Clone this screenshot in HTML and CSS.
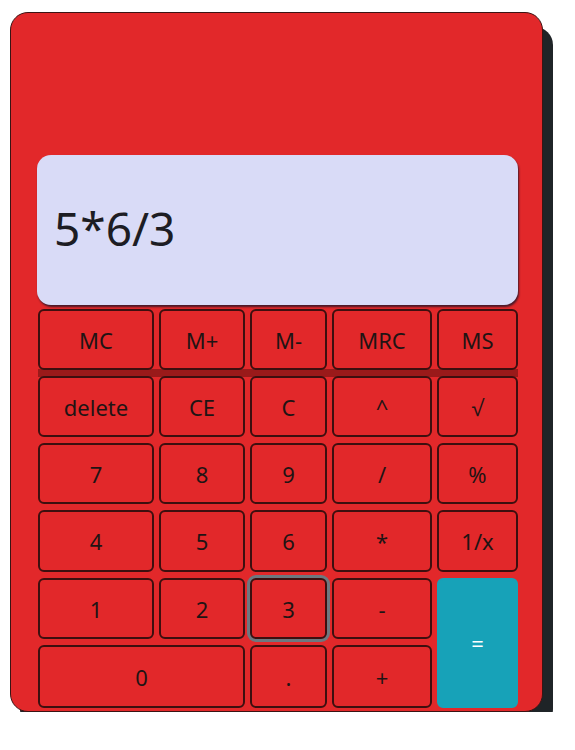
FILE: index.html
```html
<!DOCTYPE html>
<html>
<head>
<meta charset="utf-8">
<title>Calculator</title>
<link rel="stylesheet" href="styles.css">
</head>
<body>
<div class="calc">
  <div class="display">5*6/3</div>
  <div class="keys">
    <button class="key">MC</button>
    <button class="key">M+</button>
    <button class="key">M-</button>
    <button class="key">MRC</button>
    <button class="key">MS</button>
    <button class="key">delete</button>
    <button class="key">CE</button>
    <button class="key">C</button>
    <button class="key">^</button>
    <button class="key">√</button>
    <button class="key">7</button>
    <button class="key">8</button>
    <button class="key">9</button>
    <button class="key">/</button>
    <button class="key">%</button>
    <button class="key">4</button>
    <button class="key">5</button>
    <button class="key">6</button>
    <button class="key">*</button>
    <button class="key">1/x</button>
    <button class="key">1</button>
    <button class="key">2</button>
    <button class="key key-focus">3</button>
    <button class="key">-</button>
    <button class="key key-eq">=</button>
    <button class="key key-zero">0</button>
    <button class="key">.</button>
    <button class="key">+</button>
  </div>
</div>
</body>
</html>
```
FILE: styles.css
```css
html, body {
  margin: 0;
  padding: 0;
  background: #ffffff;
}

body {
  font-family: "Noto Sans", "Open Sans", sans-serif;
}

.calc {
  margin: 12px 0 0 10px;
  width: 533px;
  height: 700px;
  box-sizing: border-box;
  background: #e2282a;
  border: 1.5px solid #3a1414;
  border-radius: 18px;
  box-shadow: 10px 15px 0 #1f2427;
  padding: 142px 24px 0 26px;
}

.display {
  height: 150px;
  box-sizing: border-box;
  background: #d9dbf7;
  border-radius: 14px;
  box-shadow: 1px 2px 2px rgba(20, 20, 40, 0.75);
  display: flex;
  align-items: center;
  padding: 0 0 4px 17px;
  font-size: 46px;
  color: #1d1d24;
}

.keys {
  margin: 4px 0 0 1px;
  display: grid;
  grid-template-columns: 116px 86px 77px 100px 81px;
  grid-template-rows: 61px 61px 61px 62px 61px 63px;
  column-gap: 5px;
  row-gap: 6px;
  position: relative;
}

.keys::before {
  content: "";
  position: absolute;
  left: 0;
  right: 0;
  top: 60px;
  height: 8px;
  background: #9a1a1a;
  z-index: 0;
}

.key {
  position: relative;
  z-index: 1;
  margin: 0;
  padding: 0;
  background: #e2282a;
  border: 2px solid #3d0f0f;
  border-radius: 6px;
  font-family: "Noto Sans", "Open Sans", sans-serif;
  font-size: 22px;
  color: #1f1414;
  display: flex;
  align-items: center;
  justify-content: center;
}

.key-focus {
  box-shadow: 0 0 0 3px #6d7880;
}

.key-eq {
  grid-column: 5;
  grid-row: 5 / span 2;
  background: #17a2b8;
  border-color: #17a2b8;
  color: #ffffff;
}

.key-zero {
  grid-column: 1 / span 2;
}
```
